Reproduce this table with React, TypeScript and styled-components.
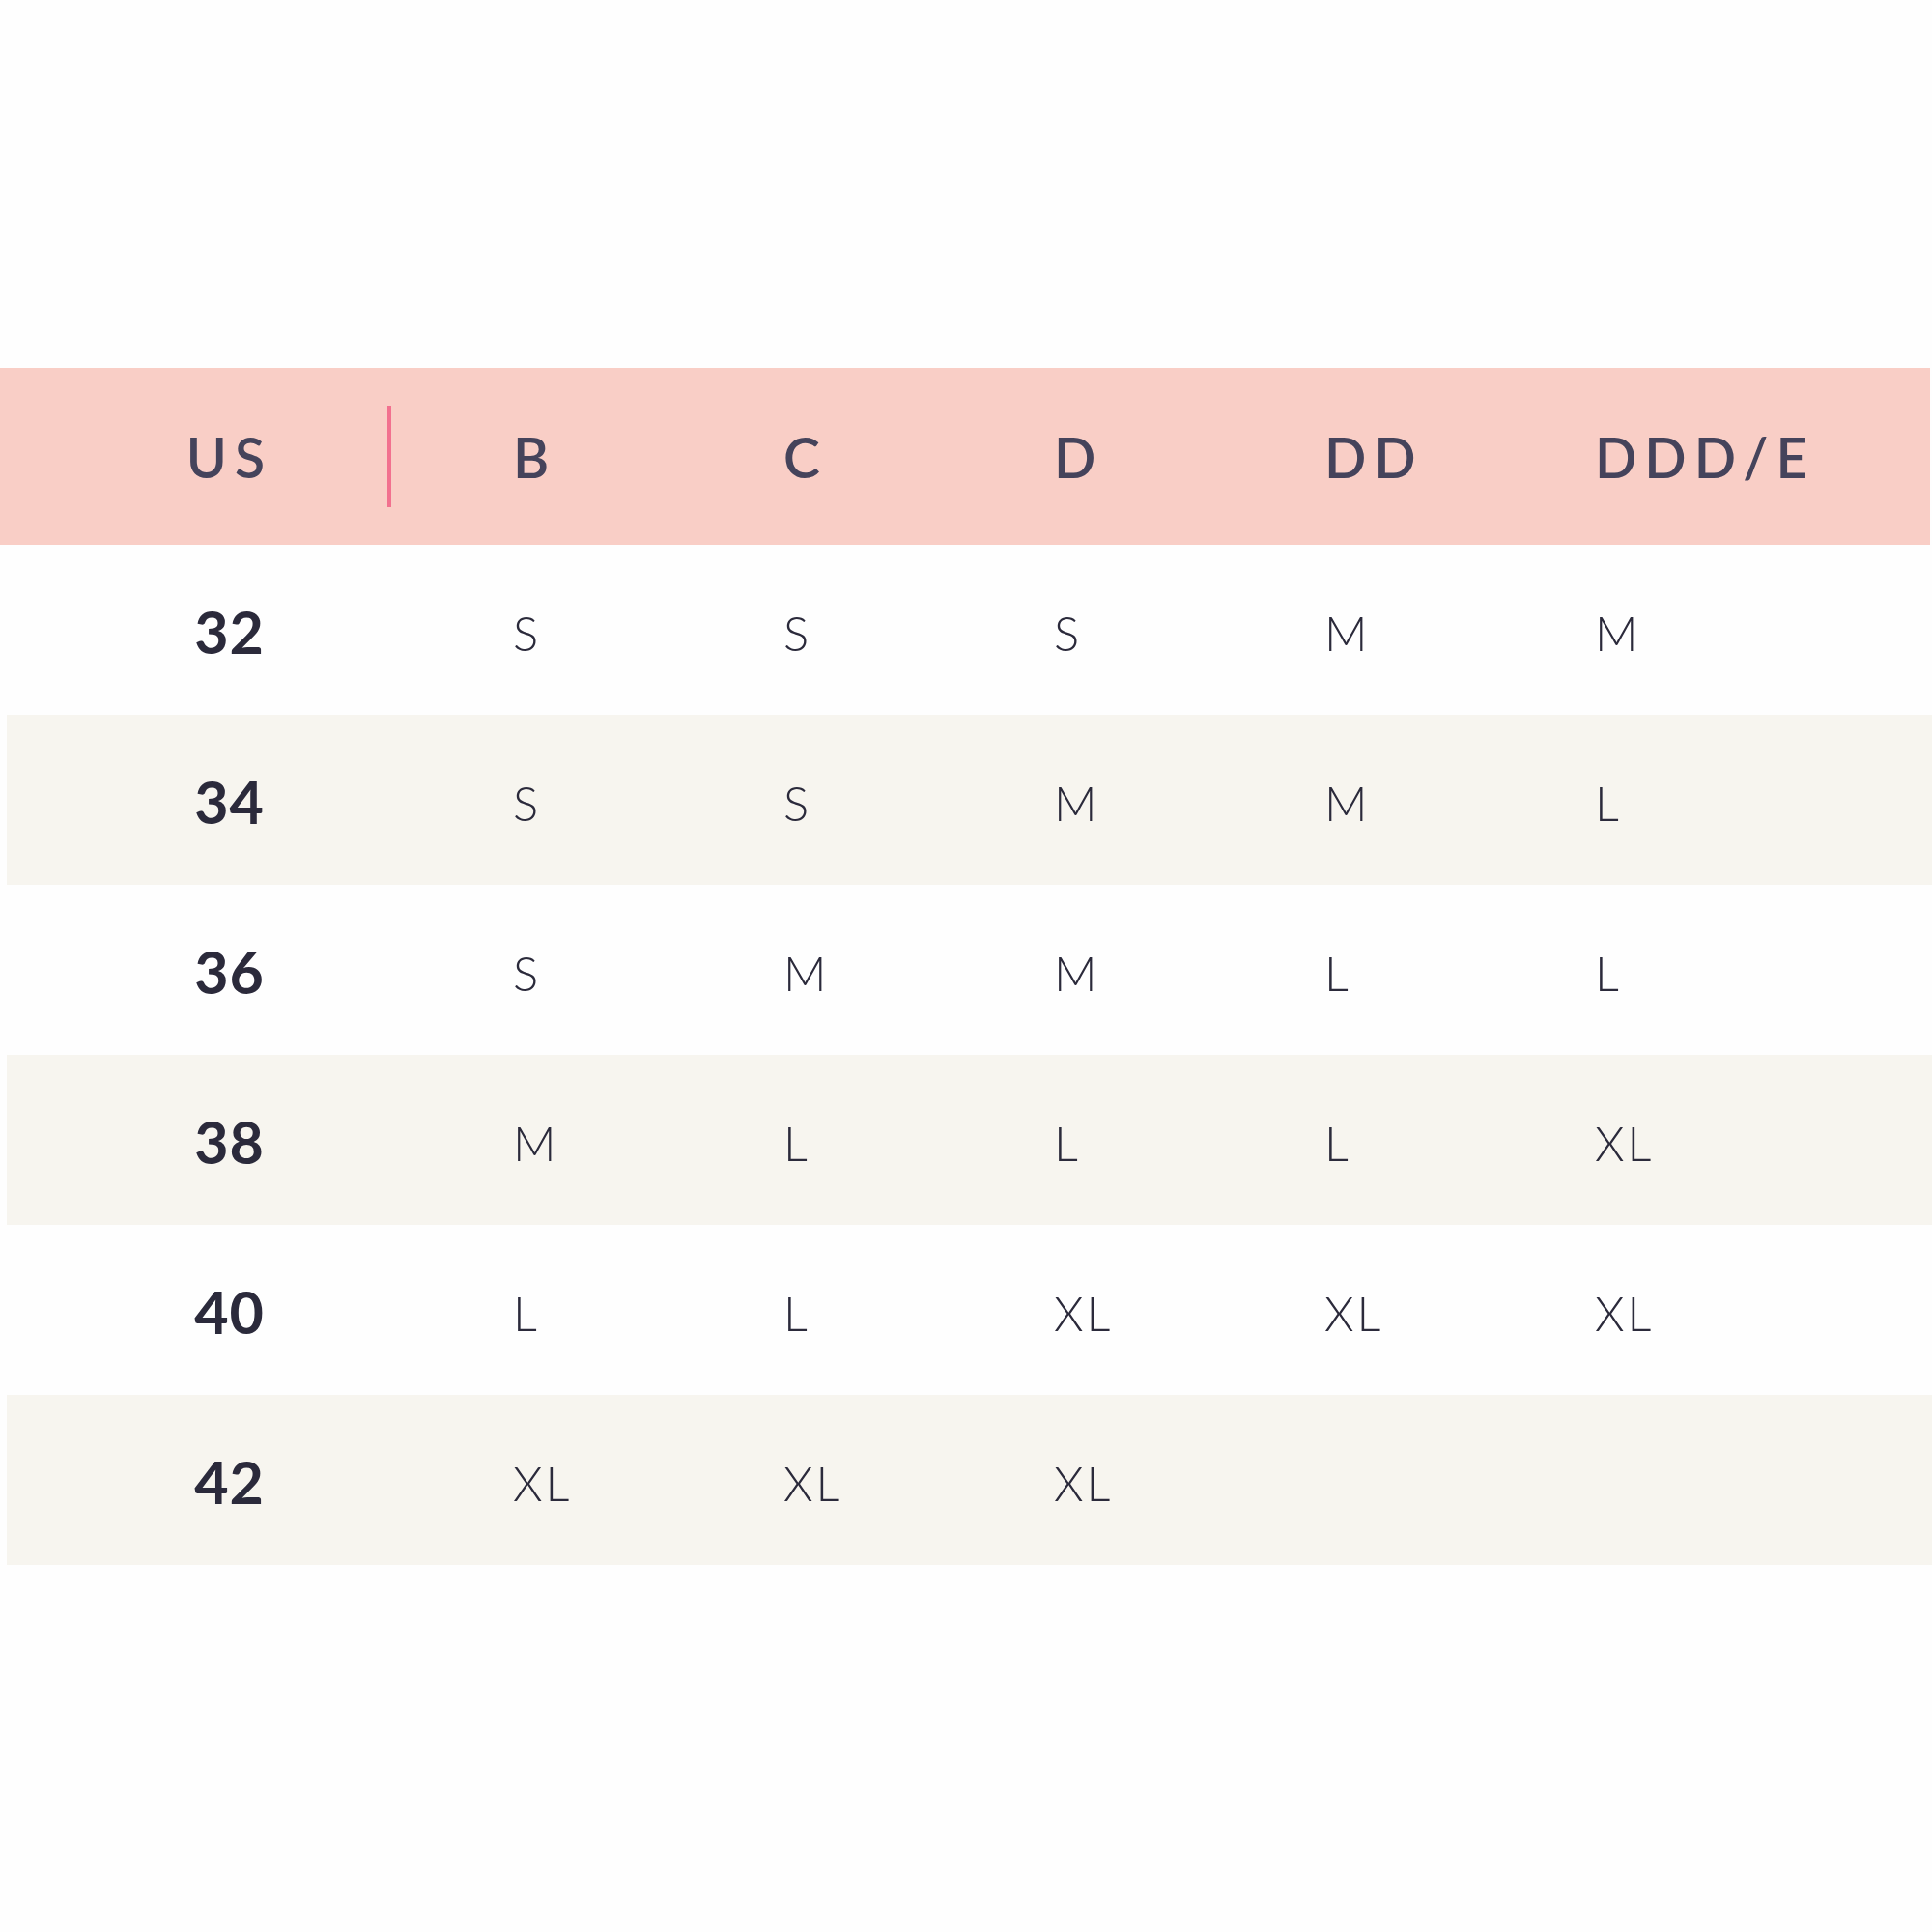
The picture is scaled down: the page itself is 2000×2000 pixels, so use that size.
import React from 'react';
import styled, { createGlobalStyle } from 'styled-components';

const GlobalStyle = createGlobalStyle`
  html, body {
    margin: 0;
    padding: 0;
    background: #fefefe;
  }
  body {
    font-family: Lato, 'Open Sans', sans-serif;
  }
`;

const cups = ['B', 'C', 'D', 'DD', 'DDD/E'];

const rows: { band: string; sizes: string[] }[] = [
  { band: '32', sizes: ['S', 'S', 'S', 'M', 'M'] },
  { band: '34', sizes: ['S', 'S', 'M', 'M', 'L'] },
  { band: '36', sizes: ['S', 'M', 'M', 'L', 'L'] },
  { band: '38', sizes: ['M', 'L', 'L', 'L', 'XL'] },
  { band: '40', sizes: ['L', 'L', 'XL', 'XL', 'XL'] },
  { band: '42', sizes: ['XL', 'XL', 'XL', '', ''] },
];

export default function App() {
  return (
    <>
      <GlobalStyle />
      <Page>
        <Header>
          <HeaderLabel>
            <HeadText>US</HeadText>
            <Divider />
          </HeaderLabel>
          {cups.map((c) => (
            <HeadCell key={c}>
              <HeadText>{c}</HeadText>
            </HeadCell>
          ))}
        </Header>
        {rows.map((r, i) => (
          <Row key={r.band} $striped={i % 2 === 1}>
            <BandCell>{r.band}</BandCell>
            {r.sizes.map((s, j) => (
              <SizeCell key={j}>{s}</SizeCell>
            ))}
          </Row>
        ))}
      </Page>
    </>
  );
}

const Page = styled.div`
  width: 2000px;
  height: 2000px;
  padding-top: 381px;
  box-sizing: border-box;
`;

const Header = styled.div`
  display: grid;
  grid-template-columns: 531px repeat(5, 280px) 1fr;
  align-items: center;
  height: 183px;
  width: 1998px;
  background: #f9cec6;
`;

const HeaderLabel = styled.div`
  display: flex;
  align-items: center;
  justify-content: flex-end;
  gap: 119px;
  padding-right: 126px;
`;

const Divider = styled.div`
  width: 4px;
  height: 105px;
  background: #f2718f;
`;

const HeadCell = styled.div`
  display: flex;
  align-items: center;
`;

const HeadText = styled.span`
  font-family: Lato, 'Open Sans', sans-serif;
  font-weight: 600;
  font-size: 57px;
  letter-spacing: 8px;
  color: #45435b;
`;

const Row = styled.div<{ $striped: boolean }>`
  display: grid;
  grid-template-columns: 524px repeat(5, 280px) 1fr;
  align-items: center;
  height: 176px;
  margin-left: 7px;
  background: ${(p) => (p.$striped ? '#f7f5ef' : 'transparent')};
`;

const BandCell = styled.div`
  text-align: right;
  padding-right: 257px;
  padding-top: 2px;
  font-weight: 700;
  font-size: 61px;
  letter-spacing: 1px;
  color: #2b2a3b;
`;

const SizeCell = styled.div`
  padding-top: 5px;
  font-family: Lato, 'Open Sans', sans-serif;
  font-weight: 300;
  font-size: 49px;
  letter-spacing: 3px;
  color: #2b2a3b;
`;
